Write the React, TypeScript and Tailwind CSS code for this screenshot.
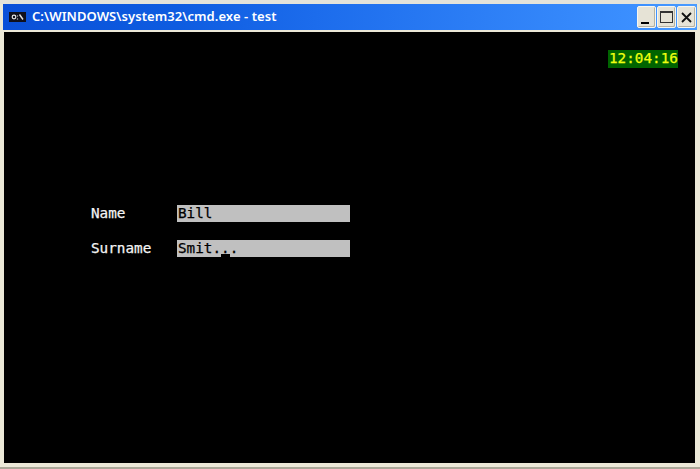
const mono = 'font-["DejaVu_Sans_Mono",monospace] text-[14.3px] leading-[17px] [-webkit-text-stroke:0.25px_currentColor]';

function ConsoleIcon() {
  return (
    <svg width="17" height="10" viewBox="0 0 17 10" className="shrink-0">
      <rect width="17" height="10" fill="#10101c" />
      <circle cx="5" cy="5" r="1.8" fill="none" stroke="#e4e4e4" strokeWidth="1.2" />
      <path d="M8.5 3.5v1M8.5 6.5v1" stroke="#e4e4e4" strokeWidth="1.2" />
      <path d="M10.5 2.5l3.5 5" stroke="#e4e4e4" strokeWidth="1.4" />
    </svg>
  );
}

function CaptionButton({ children }: { children: React.ReactNode }) {
  return (
    <div className="flex h-[22px] w-[19px] items-center justify-center rounded-[2px] border border-[#f6f6f0] bg-[#e6e3d6] shadow-[inset_-1px_-1px_0_#b4b2a4]">
      {children}
    </div>
  );
}

function Field({ label, value, cursor }: { label: string; value: string; cursor?: boolean }) {
  return (
    <div className={`flex h-[17px] items-center text-[#f4f4f4] ${mono}`}>
      <span className="w-[86px] shrink-0">{label}</span>
      <div className="relative h-[17px] w-[173px] bg-[#c0c0c0] pl-px text-black">
        {value}
        {cursor && <span className="absolute left-[44px] top-[14px] h-[3px] w-[9px] bg-black" />}
      </div>
    </div>
  );
}

export default function App() {
  return (
    <div className="flex h-[469px] w-[700px] flex-col overflow-hidden bg-[#ece9d8] shadow-[inset_0_-2px_0_#aca899]">
      <div className="h-[4px] bg-[#e4e3da]" />
      <div className="mx-[3px] flex h-[26px] items-center bg-[linear-gradient(90deg,#0a50d8_0%,#0e5ce0_25%,#1c6cec_45%,#3c90ff_92%,#4a9cff_100%)] pl-[6px] pr-[1px]">
        <ConsoleIcon />
        <span className='ml-[6px] font-["Noto_Sans",sans-serif] text-[13px] font-semibold tracking-[0.06px] text-white'>
          {'C:\\WINDOWS\\system32\\cmd.exe - test'}
        </span>
        <div className="ml-auto flex gap-px">
          <CaptionButton>
            <div className="mt-[12px] mr-[3px] h-[2px] w-[8px] bg-black" />
          </CaptionButton>
          <CaptionButton>
            <div className="h-[12px] w-[13px] border border-t-2 border-[#333]" />
          </CaptionButton>
          <CaptionButton>
            <svg width="11" height="11" viewBox="0 0 11 11">
              <path d="M1 1l9 9M10 1l-9 9" stroke="#111" strokeWidth="1.8" />
            </svg>
          </CaptionButton>
        </div>
      </div>
      <div className="mt-[2px] mr-[5px] mb-[6px] ml-[4px] flex flex-1 flex-col bg-black pt-[18px] pr-[17px] pl-[87px]">
        <div className="flex justify-end">
          <div className={`h-[18px] w-[70px] bg-[#006400] pl-px text-[#eeff10] ${mono}`}>12:04:16</div>
        </div>
        <div className="mt-[137px] flex flex-col gap-[18px]">
          <Field label="Name" value="Bill" />
          <Field label="Surname" value="Smit..." cursor />
        </div>
      </div>
    </div>
  );
}
